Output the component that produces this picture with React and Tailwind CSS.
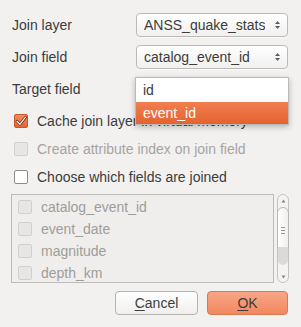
import React from "react";

const font = { fontFamily: '"Liberation Sans", Arial, sans-serif' };

function Arrows() {
  return (
    <svg width="7" height="12" viewBox="0 0 7 12" className="shrink-0">
      <path d="M3.5 2 L6 5 L1 5 Z" fill="#5c5c5c" />
      <path d="M3.5 10 L6 7 L1 7 Z" fill="#5c5c5c" />
    </svg>
  );
}

function Combo({ value }) {
  return (
    <div className="w-[152px] h-[24px] flex items-center justify-between pl-[7px] pr-[6px] rounded-[4px] border border-[#bcbab6] bg-gradient-to-b from-[#ffffff] to-[#f1f0ef] text-[#3c3c3c] shadow-[0_1px_0_rgba(255,255,255,0.6)]">
      <span className="truncate">{value}</span>
      <Arrows />
    </div>
  );
}

function Check({ state }) {
  if (state === "checked") {
    return (
      <div className="w-[14px] h-[14px] rounded-[2px] border border-[#c9552b] bg-gradient-to-b from-[#f48a5c] to-[#e8642f] flex items-center justify-center shrink-0">
        <svg width="12" height="12" viewBox="0 0 12 12">
          <path d="M2 6.2 L5 9.2 L10.5 2.2" fill="none" stroke="#4a2010" strokeWidth="2.6" strokeLinecap="round" strokeLinejoin="round" />
          <path d="M2 6.2 L5 9.2 L10.5 2.2" fill="none" stroke="#fff3ec" strokeWidth="1.3" strokeLinecap="round" strokeLinejoin="round" />
        </svg>
      </div>
    );
  }
  if (state === "disabled") {
    return <div className="w-[14px] h-[14px] rounded-[2px] border border-[#d2d0cd] bg-[#e7e6e4] shrink-0" />;
  }
  return <div className="w-[14px] h-[14px] rounded-[2px] border border-[#8e8c89] bg-white shrink-0" />;
}

function CheckRow({ state, label, muted }) {
  return (
    <div className="h-[28px] flex items-center pl-[14px] gap-[9px]">
      <Check state={state} />
      <span className={muted ? "text-[#a6a4a1]" : "text-[#3c3c3c]"}>{label}</span>
    </div>
  );
}

function Scrollbar() {
  return (
    <div className="w-[12px] h-[89px] rounded-full border border-[#c4c2bf] bg-[#f4f3f2] flex flex-col items-center">
      <div className="h-[12px] flex items-center justify-center">
        <svg width="5" height="4" viewBox="0 0 5 4"><path d="M2.5 0.5 L4.5 3.5 L0.5 3.5 Z" fill="#8a8886" /></svg>
      </div>
      <div className="w-[12px] h-[46px] -mx-px rounded-full border border-[#b9b7b4] bg-gradient-to-r from-[#ffffff] to-[#f0efee] flex flex-col items-center justify-center gap-[2px]">
        <div className="w-[4px] h-px bg-[#9a9896]" />
        <div className="w-[4px] h-px bg-[#9a9896]" />
        <div className="w-[4px] h-px bg-[#9a9896]" />
      </div>
      <div className="w-[10px] h-[18px] -mt-[6px] rounded-b-full bg-[#dcdad7]" />
      <div className="flex-1 flex items-end justify-center pb-[3px]">
        <svg width="5" height="4" viewBox="0 0 5 4"><path d="M2.5 3.5 L4.5 0.5 L0.5 0.5 Z" fill="#8a8886" /></svg>
      </div>
    </div>
  );
}

export default function App() {
  const fields = ["catalog_event_id", "event_date", "magnitude", "depth_km"];
  return (
    <div style={font} className="relative w-[301px] h-[327px] bg-[#f2f1f0] text-[14px] text-[#3c3c3c] overflow-hidden">
      <div className="flex flex-col pt-[13px]">
        <div className="flex flex-col gap-[8px] pl-[12px] pr-[13px]">
          <div className="flex items-center justify-between h-[24px]">
            <span>Join layer</span>
            <Combo value="ANSS_quake_stats" />
          </div>
          <div className="flex items-center justify-between h-[24px]">
            <span>Join field</span>
            <Combo value="catalog_event_id" />
          </div>
          {/* combo is hidden behind the open popup */}
          <div className="flex items-center h-[24px]">
            <span>Target field</span>
          </div>
        </div>

        <div className="flex flex-col mt-[6px]">
          <CheckRow state="checked" label="Cache join layer in virtual memory" />
          <CheckRow state="disabled" label="Create attribute index on join field" muted />
          <CheckRow state="unchecked" label="Choose which fields are joined" />
        </div>

        <div className="flex gap-[3px] pl-[11px] pr-[12px] mt-[3px]">
          <div className="flex-1 h-[89px] border border-[#bdbbb8] bg-[#efeeec] pt-px">
            {fields.map((f) => (
              <div key={f} className="h-[22px] flex items-center pl-[6px] gap-[9px]">
                <Check state="disabled" />
                <span className="text-[#9f9d9a]">{f}</span>
              </div>
            ))}
          </div>
          <Scrollbar />
        </div>

        <div className="flex justify-end gap-[9px] pr-[13px] mt-[8px]">
          <button className="w-[83px] h-[24px] rounded-[4px] border border-[#b5b3b0] bg-gradient-to-b from-[#ffffff] to-[#f0efee] text-[#3c3c3c]">
            <span className="underline underline-offset-2">C</span>ancel
          </button>
          <button className="w-[81px] h-[24px] rounded-[4px] border border-[#d9794f] bg-gradient-to-b from-[#f8a686] to-[#f2875f] text-[#3c3c3c]">
            <span className="underline underline-offset-2">O</span>K
          </button>
        </div>
      </div>

      <div className="absolute left-[135px] top-[77px] w-[154px] border border-[#bcbab7] bg-white shadow-[0_2px_6px_rgba(0,0,0,0.25)]">
        <div className="h-[24px] flex items-center pl-[7px]">id</div>
        <div className="h-[22px] flex items-center pl-[7px] bg-gradient-to-b from-[#f27e4f] to-[#e4632f] text-white">event_id</div>
      </div>
    </div>
  );
}
